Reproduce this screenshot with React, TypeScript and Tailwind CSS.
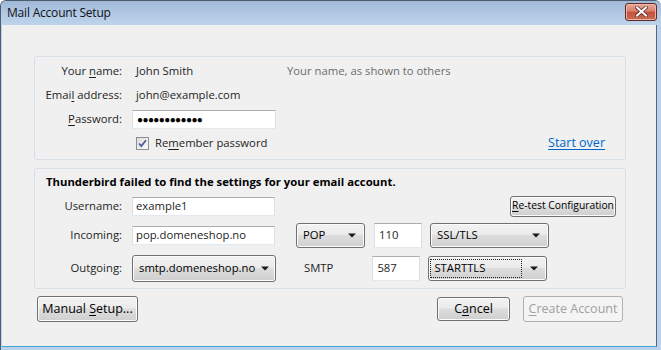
import React from "react";

const face =
  "rounded-[3px] border border-[#707070] bg-[linear-gradient(to_bottom,#f2f2f2,#ebebeb_45%,#dddddd_50%,#cfcfcf)] text-[#000] shadow-[inset_0_0_0_1px_#fcfcfc]";
const btn = `${face} flex items-center justify-center whitespace-nowrap`;
const field = "flex items-center border border-[#abadb3] border-b-[#e3e9ef] border-x-[#dbdfe6] bg-white pl-[3px]";

function Arrow() {
  return (
    <svg width="8" height="5" viewBox="0 0 8 5" className="shrink-0">
      <path d="M0 0.5h8L4 4.5z" fill="#1a1a1a" />
    </svg>
  );
}

function U({ children }: { children: React.ReactNode }) {
  return <span className="underline underline-offset-[2px]">{children}</span>;
}

function Select({ label, className, focus }: { label: string; className: string; focus?: boolean }) {
  return (
    <div className={`${face} ${className} flex items-center whitespace-nowrap`}>
      {focus ? (
        <span className="ml-[1px] flex-1 h-[19px] flex items-center border border-dotted border-[#222] pl-[3px]">{label}</span>
      ) : (
        <span className="ml-[6px] flex-1">{label}</span>
      )}
      <span className="w-[24px] flex justify-center">
        <Arrow />
      </span>
    </div>
  );
}

export default function App() {
  return (
    <div
      className="relative w-[661px] h-[350px] flex flex-col bg-[#bcd2ea] border-l border-t border-[#4d5d70] rounded-tl-[6px] rounded-tr-[6px] overflow-hidden text-[11.3px] text-[#1e1e1e]"
      style={{ fontFamily: "'Open Sans', 'Noto Sans', sans-serif" }}
    >
      {/* title bar */}
      <div className="h-[24px] flex items-center justify-between bg-[linear-gradient(to_bottom,#9fb8d6,#b3cbe6_60%,#bdd3ea)] pl-[6px] pr-[4px]">
        <span className="text-[12px] text-[#111] tracking-[-0.2px]">Mail Account Setup</span>
        <div className="mt-[-3px] w-[32px] h-[18px] rounded-[3px] border border-[#5e2c26] bg-[linear-gradient(to_bottom,#e9a99b,#d87f6c_45%,#c4503a_50%,#c86d55)] flex items-center justify-center shadow-[inset_0_0_0_1px_#f0b4a4]">
          <svg width="13" height="11" viewBox="0 0 13 11">
            <path d="M2 1.5l9 8M11 1.5l-9 8" stroke="#5a2a22" strokeWidth="3.6" strokeLinecap="square" />
            <path d="M2 1.5l9 8M11 1.5l-9 8" stroke="#ffffff" strokeWidth="2" strokeLinecap="square" />
          </svg>
        </div>
      </div>

      {/* client area */}
      <div className="flex-1 flex flex-col ml-[1px] mr-[4px] mb-[3px] bg-[#f0f0f0] border-r border-b border-r-[#4a6a8a] border-b-[#3aa6d8] pl-[32px] pr-[30px] pt-[31px] gap-[8px]">
        {/* group 1 */}
        <div className="h-[104px] rounded-[3px] border border-[#d5dfe5] flex flex-col pt-[4px] gap-[4px]">
          <div className="flex h-[20px] items-center">
            <span className="w-[87px] text-right">
              Your <U>n</U>ame:
            </span>
            <span className="ml-[14px] w-[141px]">John Smith</span>
            <span className="ml-[10px] text-[#6d6d6d]">Your name, as shown to others</span>
          </div>
          <div className="flex h-[20px] items-center">
            <span className="w-[87px] text-right">
              Emai<U>l</U> address:
            </span>
            <span className="ml-[14px]">john@example.com</span>
          </div>
          <div className="flex h-[20px] items-center">
            <span className="w-[87px] text-right">
              <U>P</U>assword:
            </span>
            <div className={`${field} ml-[10px] w-[144px] h-[19px] !pl-[4px]`}>
              <span className="text-[10px] tracking-[-0.6px] leading-none text-[#000]">●●●●●●●●●●●●</span>
            </div>
          </div>
          <div className="flex h-[20px] items-center">
            <div className="ml-[101px] w-[13px] h-[13px] border border-[#8e8f8f] bg-[linear-gradient(135deg,#dcdcdc,#fbfbfb)] flex items-center justify-center">
              <svg width="9" height="9" viewBox="0 0 9 9">
                <path d="M1 4.5l2.3 2.5L8 1.2" fill="none" stroke="#4a5f97" strokeWidth="1.8" />
              </svg>
            </div>
            <span className="ml-[6px]">
              Re<U>m</U>ember password
            </span>
            <span className="ml-auto mr-[20px] text-[#0066cc] underline underline-offset-[2px] text-[12.5px]">Start over</span>
          </div>
        </div>

        {/* group 2 */}
        <div className="h-[121px] rounded-[3px] border border-[#d5dfe5] flex flex-col pt-[3px]">
          <div className="h-[20px] flex items-center pl-[11px] font-bold text-[#000]">
            Thunderbird failed to find the settings for your email account.
          </div>
          <div className="mt-[4px] flex h-[20px] items-center">
            <span className="w-[87px] text-right">Username:</span>
            <div className={`${field} ml-[10px] w-[143px] h-[19px]`}>example1</div>
            <div className={`${btn} ml-auto mr-[9px] w-[106px] h-[21px] text-[10.3px]`}>
              <span>
                <U>R</U>e-test Configuration
              </span>
            </div>
          </div>
          <div className="mt-[7px] flex h-[25px] items-center">
            <span className="w-[87px] text-right">Incoming:</span>
            <div className={`${field} ml-[10px] w-[143px] h-[19px]`}>pop.domeneshop.no</div>
            <Select label="POP" className="ml-[21px] w-[69px] h-[25px]" />
            <div className={`${field} ml-[9px] w-[48px] h-[25px] !pl-[4px]`}>110</div>
            <Select label="SSL/TLS" className="ml-[8px] w-[119px] h-[25px]" />
          </div>
          <div className="mt-[7px] flex h-[27px] items-center">
            <span className="w-[87px] text-right">Outgoing:</span>
            <Select label="smtp.domeneshop.no" className="ml-[10px] w-[144px] h-[27px]" />
            <span className="ml-[28px]">SMTP</span>
            <div className={`${field} ml-[39px] w-[48px] h-[25px] !pl-[4px]`}>587</div>
            <Select label="STARTTLS" className="ml-[8px] w-[119px] h-[25px]" focus />
          </div>
        </div>

        {/* buttons */}
        <div className="flex items-center mt-[-1px] pl-[3px] pr-[3px]">
          <div className={`${btn} w-[101px] h-[26px] text-[12.5px]`}>
            <span>
              Manual <U>S</U>etup...
            </span>
          </div>
          <div className={`${btn} ml-auto w-[73px] h-[24px] text-[12.5px]`}>
            <span>
              C<U>a</U>ncel
            </span>
          </div>
          <div className="ml-[13px] w-[100px] h-[26px] rounded-[3px] border border-[#adb2b5] bg-[#f4f4f4] flex items-center justify-center text-[#a0a0a0] text-[12.5px]">
            <span>
              <U>C</U>reate Account
            </span>
          </div>
        </div>
      </div>
    </div>
  );
}
